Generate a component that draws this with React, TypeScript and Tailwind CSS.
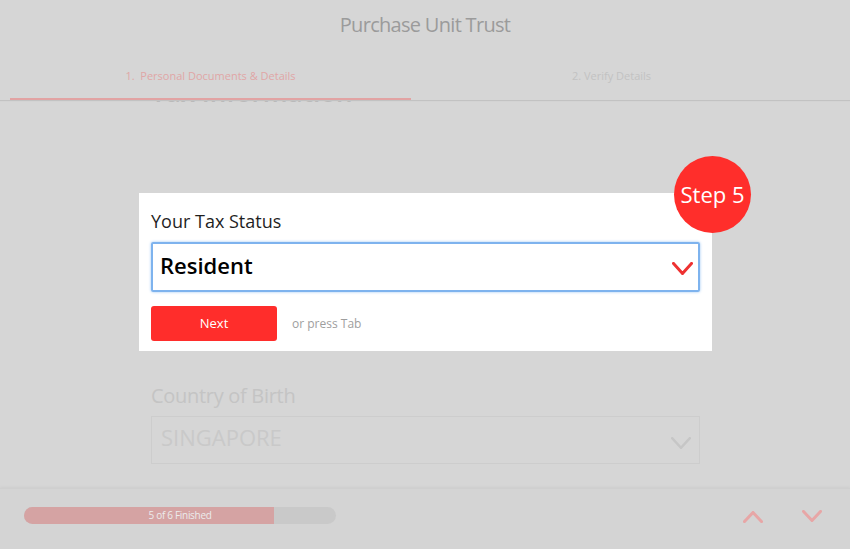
import React from "react";

const Chevron = ({ dir, className, w = 20, h = 12, sw = 3 }: { dir: "up" | "down"; className?: string; w?: number; h?: number; sw?: number }) => (
  <svg width={w} height={h} viewBox={`0 0 ${w} ${h}`} className={className} fill="none">
    {dir === "down" ? (
      <polyline points={`${sw / 2},${sw / 2} ${w / 2},${h - sw / 2} ${w - sw / 2},${sw / 2}`} stroke="currentColor" strokeWidth={sw} strokeLinecap="square" strokeLinejoin="miter" />
    ) : (
      <polyline points={`${sw / 2},${h - sw / 2} ${w / 2},${sw / 2} ${w - sw / 2},${h - sw / 2}`} stroke="currentColor" strokeWidth={sw} strokeLinecap="square" strokeLinejoin="miter" />
    )}
  </svg>
);

export default function App() {
  return (
    <div
      className="relative flex h-[549px] w-[850px] flex-col overflow-hidden bg-[#d6d6d6]"
      style={{ fontFamily: '"Open Sans", "Noto Sans", sans-serif' }}
    >
      {/* Header */}
      <div className="relative z-10 flex h-[100px] shrink-0 flex-col bg-[#d6d6d6] shadow-[0_1px_1px_#c2c2c2]">
        <div className="flex h-[50px] items-center justify-center text-[20px] tracking-[-0.7px] text-[#9b9b9b]">
          Purchase Unit Trust
        </div>
        <div className="flex h-[50px] px-[10px]">
          <div className="flex w-[401px] items-start justify-center border-b-2 border-[#e2a3a3] pt-[18px] text-[11px] text-[#e0a6a6]">
            1.&nbsp; Personal Documents &amp; Details
          </div>
          <div className="flex w-[401px] items-start justify-center pt-[18px] text-[11px] text-[#c2c2c2]">
            2. Verify Details
          </div>
        </div>
      </div>

      {/* Faded underlying content (scrolled) */}
      <div className="relative z-0 h-[388px] shrink-0 overflow-hidden">
        <div className="-mt-[20px] flex flex-col pl-[151px] pr-[150px]">
          <div className="text-[26px] leading-[24px] font-semibold text-[#b8b8b8]">Tax Information</div>
          <div className="mt-[277px] text-[20px] tracking-[-0.3px] text-[#c4c4c4]">Country of Birth</div>
          <div className="mt-[5px] flex h-[48px] items-center justify-between border border-[#cdcdcd] pl-[9px] pr-[8px]">
            <span className="pb-[6px] text-[22px] text-[#c9c9c9]">SINGAPORE</span>
            <Chevron dir="down" w={20} h={12} sw={2.5} className="mt-[6px] text-[#c6c6c6]" />
          </div>
        </div>
      </div>

      {/* Bottom bar */}
      <div className="flex h-[61px] shrink-0 items-start justify-between border-t border-[#cfcfcf] bg-[#d4d4d4] pl-[24px] pr-[28px] pt-[18px] shadow-[0_-1px_2px_#cecece]">
        <div className="relative h-[17px] w-[312px] overflow-hidden rounded-full bg-[#c9c9c9]">
          <div className="h-full w-[250px] bg-[#d5a3a3]" />
          <div className="absolute inset-0 flex items-center justify-center text-[10px] tracking-[-0.3px] text-[#ececec]">
            5 of 6 Finished
          </div>
        </div>
        <div className="flex items-center gap-[39px] pt-[4px]">
          <Chevron dir="up" w={20} h={12} sw={3} className="text-[#e7a6a6]" />
          <Chevron dir="down" w={20} h={12} sw={3} className="-mt-[2px] text-[#e7a6a6]" />
        </div>
      </div>

      {/* Modal */}
      <div className="absolute left-[139px] top-[193px] z-20 flex h-[158px] w-[573px] flex-col bg-white px-[12px] pt-[16px]">
        <div className="text-[18px] leading-[24px] text-[#1f1f1f]">Your Tax Status</div>
        <div className="mt-[9px] flex h-[50px] items-center justify-between rounded-[2px] border-2 border-[#7eb3ee] pl-[7px] pr-[5px] shadow-[0_0_3px_#9cc6f2]">
          <span className="-mt-[3px] text-[22px] font-semibold text-black">Resident</span>
          <Chevron dir="down" w={21} h={13} sw={3} className="mt-[3px] text-[#ee3131]" />
        </div>
        <div className="mt-[14px] flex items-center">
          <div className="flex h-[35px] w-[126px] items-center justify-center rounded-[3px] bg-[#ff2d2b] text-[13px] text-white">
            Next
          </div>
          <span className="ml-[15px] text-[12px] text-[#9e9e9e]">or press Tab</span>
        </div>
      </div>

      {/* Step badge */}
      <div className="absolute left-[674px] top-[156px] z-30 flex h-[77px] w-[77px] items-center justify-center rounded-full bg-[#ff2e2b] text-[22px] text-white">
        Step 5
      </div>
    </div>
  );
}
